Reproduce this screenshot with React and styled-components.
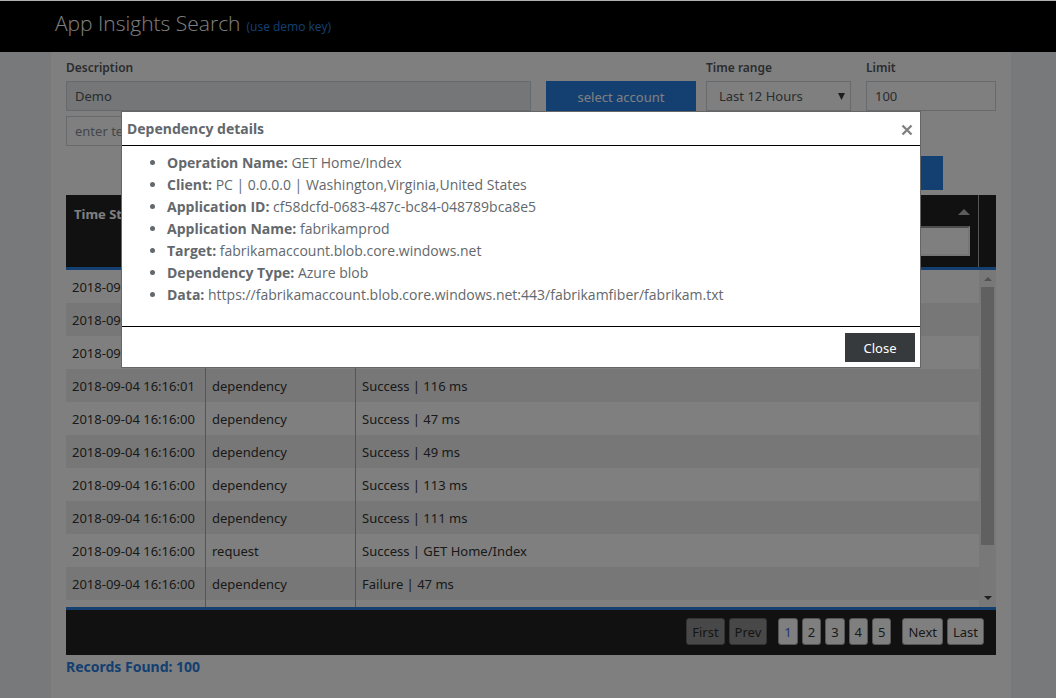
import React from "react";
import styled, { createGlobalStyle } from "styled-components";

const Global = createGlobalStyle`
  * { box-sizing: border-box; }
  body {
    margin: 0;
    background: #f1f2f6;
    color: #55595c;
    font: 13px/20px "Noto Sans", "Open Sans", sans-serif;
  }
  button, input, select { font: inherit; color: inherit; }
`;

const Shell = styled.div`
  display: flex;
  flex-direction: column;
  min-height: 100vh;
`;

const Header = styled.header`
  display: flex;
  align-items: baseline;
  gap: 6px;
  height: 52px;
  padding: 6px 55px;
  border-top: 1px solid #b0b0b0;
  background: #000;
`;

const Title = styled.h1`
  margin: 0;
  color: #fff;
  font-family: "Open Sans", sans-serif;
  font-size: 21px;
  font-weight: 300;
  line-height: 32px;
`;

const DemoLink = styled.a`
  color: #2780e3;
  font-family: "Open Sans", sans-serif;
  font-size: 12px;
  text-decoration: none;
`;

const Content = styled.main`
  flex: 1;
  margin: 0 45px 0 51px;
  padding: 6px 15px 20px;
  background: #fff;
`;

const Label = styled.label`
  font-size: 12px;
  font-weight: 600;
`;

const TextInput = styled.input`
  width: 100%;
  height: 30px;
  padding: 0 8px;
  border: 1px solid #ced4da;
  border-radius: 0;
  background: ${(p) => (p.readOnly ? "#e9ecef" : "#fff")};
  &::placeholder { color: #868e96; opacity: 1; }
`;

const FilterRow = styled.div`
  display: flex;
  align-items: flex-end;
  gap: 15px;
`;

const FilterGroup = styled.div`
  display: flex;
  flex-direction: column;
  width: ${(p) => p.$width || "auto"};
  flex: ${(p) => (p.$width ? "none" : "1")};
  gap: 3px;
`;

const Pair = styled.div`
  display: flex;
  align-items: flex-end;
  gap: 10px;
`;

const PrimaryButton = styled.button`
  width: 150px;
  height: ${(p) => p.$height || 30}px;
  padding: 2px 0 0;
  border: 0;
  background: #2780e3;
  color: #fff;
`;

const SelectBox = styled.div`
  display: grid;
  align-items: center;
  & > * { grid-area: 1 / 1; }
  svg { justify-self: end; margin-right: 6px; pointer-events: none; }
`;

const Select = styled.select`
  width: 100%;
  height: 30px;
  padding: 0 12px;
  border: 1px solid #ced4da;
  border-radius: 0;
  background: #fff;
  appearance: none;
`;

const SearchRow = styled.div`
  width: 50%;
  margin-top: 5px;
`;

const Actions = styled.div`
  display: flex;
  justify-content: flex-end;
  margin: 10px 53px 5px 0;
`;

const GridFrame = styled.div`
  display: flex;
`;

const Table = styled.table`
  display: block;
  flex: 1;
  min-width: 0;
`;

const Head = styled.thead`
  display: block;
  background: #222;
  border-bottom: 3px solid #2780e3;
`;

const Row = styled.tr`
  display: grid;
  grid-template-columns: 140px 150px minmax(0, 1fr);
`;

const HeadCell = styled.th`
  display: flex;
  flex-direction: column;
  gap: 11px;
  height: 72px;
  padding: 9px 8px;
  border-right: 1px solid #aaa;
  color: #fff;
  font-weight: 700;
  text-align: left;
  svg { align-self: flex-end; margin-top: 5px; }
`;

const HeadFilter = styled.input`
  width: 100%;
  height: 30px;
  border: 2px solid;
  border-color: #9a9a9a #eee #eee #9a9a9a;
  background: #fff;
`;

const Body = styled.tbody`
  display: block;
  height: 337px;
  overflow: hidden;
  color: #333;
  tr:nth-child(even) { background: #efefef; }
`;

const Cell = styled.td`
  height: 33px;
  padding: 7px 6px 6px;
  border-right: 1px solid #aaa;
  white-space: nowrap;
  &:last-child { border-right: 0; }
`;

const Gutter = styled.div`
  display: flex;
  flex-direction: column;
  width: 17px;
`;

const GutterHead = styled.div`
  height: 75px;
  background: #222;
  border-bottom: 3px solid #2780e3;
`;

const Track = styled.div`
  display: flex;
  flex: 1;
  flex-direction: column;
  align-items: center;
  padding: 7px 0;
  background: #f1f1f1;
`;

const Thumb = styled.div`
  width: 13px;
  height: 258px;
  margin: 6px 0 auto;
  background: #c1c1c1;
`;

const Footer = styled.nav`
  display: flex;
  justify-content: flex-end;
  gap: 11px;
  padding: 8px 12px 10px;
  border-top: 3px solid #2780e3;
  background: #222;
`;

const PageGroup = styled.div`
  display: flex;
  gap: 4px;
`;

const PageButton = styled.button`
  height: 27px;
  padding: 0 5px;
  border: 1px solid #aaa;
  border-radius: 3px;
  background: #fff;
  color: ${(p) => (p.$current ? "#3d6be0" : "#333")};
  &:disabled { opacity: 0.5; }
`;

const Records = styled.p`
  margin: 2px 0 0;
  color: #2780e3;
  font-size: 14px;
  font-weight: 700;
`;

const Overlay = styled.div`
  position: fixed;
  inset: 1px 0 0;
  display: flex;
  align-items: flex-start;
  justify-content: center;
  padding: 110px 14px 0 0;
  background: rgba(0, 0, 0, 0.5);
`;

const Dialog = styled.section`
  width: 800px;
  max-width: 100%;
  border: 1px solid #666;
  background: #fff;
  color: #63686c;
`;

const DialogHeader = styled.header`
  display: flex;
  align-items: center;
  justify-content: space-between;
  height: 34px;
  padding: 0 5px;
  border-bottom: 1px solid #000;
`;

const DialogTitle = styled.h2`
  margin: 0;
  font-size: 14px;
  font-weight: 700;
`;

const IconButton = styled.button`
  display: flex;
  padding: 3px 2px 0;
  border: 0;
  background: none;
`;

const Details = styled.ul`
  margin: 0;
  padding: 6px 5px 20px 45px;
  font-family: "Open Sans", sans-serif;
  font-size: 14px;
  line-height: 22px;
`;

const DialogFooter = styled.footer`
  display: flex;
  justify-content: flex-end;
  padding: 6px 5px 5px;
  border-top: 1px solid #000;
`;

const CloseButton = styled.button`
  width: 70px;
  height: 29px;
  padding: 1px 0 0;
  border: 0;
  background: #373a3c;
  color: #fff;
`;

const rows = [
  ["2018-09-04 16:16:01", "", ""],
  ["2018-09-04 16:16:01", "", ""],
  ["2018-09-04 16:16:01", "", ""],
  ["2018-09-04 16:16:01", "dependency", "Success | 116 ms"],
  ["2018-09-04 16:16:00", "dependency", "Success | 47 ms"],
  ["2018-09-04 16:16:00", "dependency", "Success | 49 ms"],
  ["2018-09-04 16:16:00", "dependency", "Success | 113 ms"],
  ["2018-09-04 16:16:00", "dependency", "Success | 111 ms"],
  ["2018-09-04 16:16:00", "request", "Success | GET Home/Index"],
  ["2018-09-04 16:16:00", "dependency", "Failure | 47 ms"],
  ["", "", ""],
];

const details = [
  ["Operation Name:", "GET Home/Index"],
  ["Client:", "PC | 0.0.0.0 | Washington,Virginia,United States"],
  ["Application ID:", "cf58dcfd-0683-487c-bc84-048789bca8e5"],
  ["Application Name:", "fabrikamprod"],
  ["Target:", "fabrikamaccount.blob.core.windows.net"],
  ["Dependency Type:", "Azure blob"],
  ["Data:", "https://fabrikamaccount.blob.core.windows.net:443/fabrikamfiber/fabrikam.txt"],
];

const Triangle = ({ w, h, color, down }) => (
  <svg width={w} height={h} viewBox="0 0 10 10" preserveAspectRatio="none" aria-hidden="true">
    <path d={down ? "M0 0H10L5 10Z" : "M0 10H10L5 0Z"} fill={color} />
  </svg>
);

export default function App() {
  return (
    <>
      <Global />
      <Shell>
        <Header>
          <Title>App Insights Search</Title>
          <DemoLink href="#demo">(use demo key)</DemoLink>
        </Header>
        <Content>
          <FilterRow>
            <FilterGroup>
              <Label htmlFor="description">Description</Label>
              <TextInput id="description" readOnly value="Demo" />
            </FilterGroup>
            <Pair>
              <PrimaryButton type="button">select account</PrimaryButton>
              <FilterGroup $width="145px">
                <Label htmlFor="range">Time range</Label>
                <SelectBox>
                  <Select id="range">
                    <option>Last 12 Hours</option>
                  </Select>
                  <Triangle w={7} h={7} color="#373a3c" down />
                </SelectBox>
              </FilterGroup>
            </Pair>
            <FilterGroup $width="130px">
              <Label htmlFor="limit">Limit</Label>
              <TextInput id="limit" defaultValue="100" />
            </FilterGroup>
          </FilterRow>
          <SearchRow>
            <TextInput aria-label="Search text" placeholder="enter text" />
          </SearchRow>
          <Actions>
            <PrimaryButton type="button" $height={34} aria-label="Search" />
          </Actions>
          <GridFrame>
            <Table>
              <Head>
                <Row>
                  <HeadCell>Time Stamp</HeadCell>
                  <HeadCell aria-label="Type" />
                  <HeadCell aria-label="Details">
                    <Triangle w={12} h={6} color="#bbb" />
                    <HeadFilter aria-label="Filter details" />
                  </HeadCell>
                </Row>
              </Head>
              <Body>
                {rows.map((row, i) => (
                  <Row key={i}>
                    {row.map((text, j) => (
                      <Cell key={j}>{text}</Cell>
                    ))}
                  </Row>
                ))}
              </Body>
            </Table>
            <Gutter aria-hidden="true">
              <GutterHead />
              <Track>
                <Triangle w={8} h={4} color="#a3a3a3" />
                <Thumb />
                <Triangle w={8} h={4} color="#404040" down />
              </Track>
            </Gutter>
          </GridFrame>
          <Footer aria-label="Pages">
            <PageGroup>
              <PageButton disabled>First</PageButton>
              <PageButton disabled>Prev</PageButton>
            </PageGroup>
            <PageGroup>
              {[1, 2, 3, 4, 5].map((n) => (
                <PageButton key={n} $current={n === 1}>{n}</PageButton>
              ))}
            </PageGroup>
            <PageGroup>
              <PageButton>Next</PageButton>
              <PageButton>Last</PageButton>
            </PageGroup>
          </Footer>
          <Records>Records Found: 100</Records>
        </Content>
      </Shell>
      <Overlay>
        <Dialog role="dialog" aria-modal="true" aria-labelledby="dialog-title">
          <DialogHeader>
            <DialogTitle id="dialog-title">Dependency details</DialogTitle>
            <IconButton type="button" aria-label="Dismiss">
              <svg width="12" height="12" viewBox="0 0 12 12" aria-hidden="true">
                <path d="M1.5 1.5L10.5 10.5M10.5 1.5L1.5 10.5" stroke="#808080" strokeWidth="2.4" />
              </svg>
            </IconButton>
          </DialogHeader>
          <Details>
            {details.map(([name, value]) => (
              <li key={name}>
                <b>{name}</b> {value}
              </li>
            ))}
          </Details>
          <DialogFooter>
            <CloseButton type="button">Close</CloseButton>
          </DialogFooter>
        </Dialog>
      </Overlay>
    </>
  );
}
